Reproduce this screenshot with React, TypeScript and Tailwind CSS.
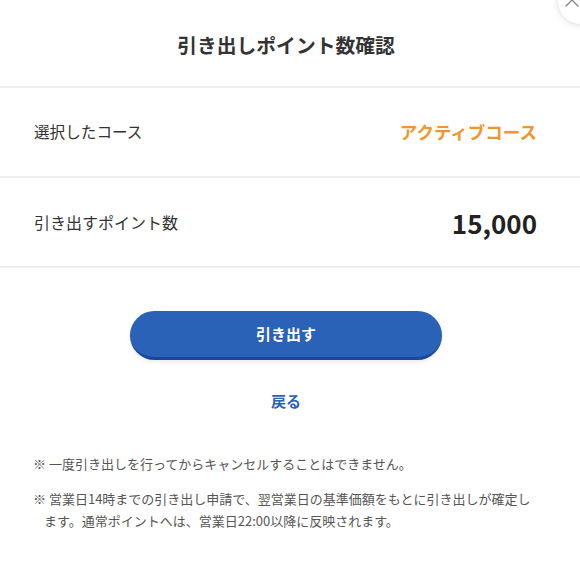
import React from 'react';

const font = { fontFamily: '"Noto Sans CJK JP", "Noto Sans", sans-serif' };

function App() {
  return (
    <div className="relative w-[580px] h-[571px] overflow-hidden bg-white text-[#333]" style={font}>
      {/* close button peeking from corner */}
      <div className="absolute -right-[24px] -top-[22px] w-[46px] h-[46px] rounded-full bg-white shadow-[0_1px_6px_rgba(0,0,0,0.15)]">
        <svg className="absolute left-[6px] top-[14px]" width="16" height="16" viewBox="0 0 16 16">
          <path d="M2 14 L14 2 M2 2 L14 14" stroke="#888" strokeWidth="1.4" strokeLinecap="round" />
        </svg>
      </div>

      <div className="h-[88px] pr-[8px] pt-[4px] flex items-center justify-center border-b-2 border-[#f0f0f0]">
        <h1 className="text-[19.8px] font-bold text-[#333]">引き出しポイント数確認</h1>
      </div>

      <div className="h-[90px] pl-[34px] pr-[43px] flex items-center justify-between border-b-2 border-[#f0f0f0]">
        <span className="text-[15.6px] text-[#333]">選択したコース</span>
        <span className="text-[17.5px] font-bold text-[#f0962c]">アクティブコース</span>
      </div>

      <div className="h-[90px] pl-[34px] pr-[43px] flex items-center justify-between border-b-2 border-[#f0f0f0]">
        <span className="text-[16px] text-[#333]">引き出すポイント数</span>
        <span className="text-[26px] font-bold text-[#222]">15,000</span>
      </div>

      <div className="flex flex-col items-center pt-[43px] pr-[8px]">
        <button className="w-[312px] h-[49px] rounded-full bg-[#2962b6] border-b-[3px] border-[#1a479c] text-white text-[15px] font-bold shadow-[0_2px_4px_rgba(0,0,0,0.08)]">
          引き出す
        </button>
        <button className="mt-[30px] text-[15px] font-bold text-[#2962b6]">戻る</button>
      </div>

      <div className="pl-[33px] pt-[40px] text-[13px] leading-[22px] text-[#555] space-y-[13px]">
        <p className="w-[530px] pl-[11px] -indent-[11px]">※ 一度引き出しを行ってからキャンセルすることはできません。</p>
        <p className="w-[530px] pl-[11px] -indent-[11px]">
          ※ 営業日14時までの引き出し申請で、翌営業日の基準価額をもとに引き出しが確定し
          <br />
          ます。通常ポイントへは、営業日22:00以降に反映されます。
        </p>
      </div>
    </div>
  );
}

export default App;
